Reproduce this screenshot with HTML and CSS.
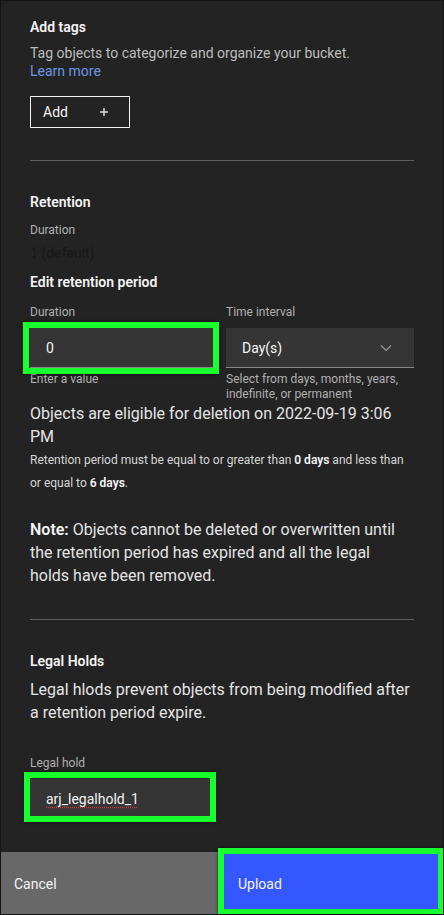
FILE: index.html
```html
<!DOCTYPE html>
<html lang="en">
<head>
<meta charset="utf-8">
<title>Upload options</title>
<link rel="stylesheet" href="styles.css">
</head>
<body>
<div class="panel">
  <div class="content">
    <section class="tags">
      <h3 class="heading">Add tags</h3>
      <p class="desc">Tag objects to categorize and organize your bucket.<br><a class="link" href="#">Learn more</a></p>
      <button class="btn-ghost" type="button"><span>Add</span>
        <svg class="plus" width="10" height="10" viewBox="0 0 10 10"><path d="M5 1v8M1 5h8" stroke="#e0e0e0" stroke-width="1.4" fill="none"/></svg>
      </button>
    </section>

    <hr class="divider">

    <section class="retention">
      <h3 class="heading">Retention</h3>
      <div class="label label-ro">Duration</div>
      <div class="default-val">1 (default)</div>
      <h3 class="heading heading-edit">Edit retention period</h3>
      <div class="fields">
        <div class="field">
          <label class="label">Duration</label>
          <div class="input-wrap">
            <div class="input">0</div>
            <div class="highlight hl-duration"></div>
          </div>
          <div class="helper">Enter a value</div>
        </div>
        <div class="field">
          <label class="label">Time interval</label>
          <div class="select">
            <span>Day(s)</span>
            <svg class="chev" width="12" height="8" viewBox="0 0 12 8"><path d="M1 1.5l5 5 5-5" stroke="#9a9a9a" stroke-width="1.2" fill="none"/></svg>
          </div>
          <div class="helper">Select from days, months, years, indefinite, or permanent</div>
        </div>
      </div>
      <p class="body">Objects are eligible for deletion on 2022-09-19 3:06 PM</p>
      <p class="rule">Retention period must be equal to or greater than <b>0 days</b> and less than or equal to <b>6 days</b>.</p>
      <p class="body note"><b>Note:</b> Objects cannot be deleted or overwritten until the retention period has expired and all the legal<br>holds have been removed.</p>
    </section>

    <hr class="divider divider-2">

    <section class="legal">
      <h3 class="heading">Legal Holds</h3>
      <p class="body legal-desc">Legal hlods prevent objects from being modified after a retention period expire.</p>
      <label class="label legal-label">Legal hold</label>
      <div class="input-wrap legal-wrap">
        <div class="input"><span class="spell">arj_legalhold_1</span></div>
        <div class="highlight hl-legal"></div>
      </div>
    </section>
  </div>

  <div class="footer">
    <button class="btn btn-cancel" type="button">Cancel</button>
    <div class="upload-wrap">
      <button class="btn btn-upload" type="button">Upload</button>
      <div class="highlight hl-upload"></div>
    </div>
  </div>
</div>
</body>
</html>
```

FILE: styles.css
```css
* { box-sizing: border-box; }

html, body {
  margin: 0;
  padding: 0;
  background: #232323;
}

body {
  font-family: Roboto, "Liberation Sans", Arial, sans-serif;
  color: #f4f4f4;
}

.panel {
  width: 444px;
  height: 915px;
  border: 1px solid #141414;
  background: #232323;
  display: flex;
  flex-direction: column;
  overflow: hidden;
}

.content {
  flex: 1;
  padding: 17px 29px 0 29px;
  overflow: hidden;
}

.heading {
  margin: 0;
  font-size: 14px;
  line-height: 18px;
  font-weight: 600;
  color: #f4f4f4;
}

.desc {
  margin: 8px 0 0;
  font-size: 14px;
  line-height: 18px;
  color: #bdbdbd;
}

.link {
  color: #6e95e6;
  text-decoration: none;
}

.btn-ghost {
  margin-top: 16px;
  width: 100px;
  height: 32px;
  padding: 0 0 0 12px;
  background: transparent;
  border: 1px solid #f4f4f4;
  color: #f4f4f4;
  font-family: inherit;
  font-size: 14px;
  display: flex;
  align-items: center;
}

.btn-ghost .plus {
  margin-left: 31px;
}

.divider {
  margin: 32px 0 0;
  border: 0;
  height: 1px;
  background: #5e5e5e;
}

.retention .heading:first-child {
  margin-top: 32px;
}

.label {
  display: block;
  font-size: 12px;
  line-height: 16px;
  color: #b0b0b0;
}

.label-ro {
  margin-top: 11px;
}

.default-val {
  margin-top: 6px;
  font-size: 14px;
  line-height: 18px;
  color: #181818;
}

.heading-edit {
  margin-top: 11px;
}

.fields {
  margin-top: 13px;
  display: grid;
  grid-template-columns: 184px 188px;
  column-gap: 12px;
}

.field .label {
  margin-bottom: 8px;
}

.input-wrap {
  position: relative;
}

.input {
  height: 40px;
  background: #353535;
  border-bottom: 1px solid #8a8a8a;
  padding: 0 16px;
  display: flex;
  align-items: center;
  font-size: 14px;
  color: #f4f4f4;
}

.select {
  height: 40px;
  background: #353535;
  border-bottom: 1px solid #8a8a8a;
  padding: 0 22px 0 16px;
  display: flex;
  align-items: center;
  justify-content: space-between;
  font-size: 14px;
  color: #f4f4f4;
}

.helper {
  margin-top: 4px;
  font-size: 12px;
  line-height: 15px;
  color: #b0b0b0;
}

.highlight {
  position: absolute;
  border: 6px solid #17ff2f;
  box-shadow: 0 0 3px rgba(0, 0, 0, 0.7);
  pointer-events: none;
}

.hl-duration {
  left: -7px;
  right: -5px;
  top: -6px;
  bottom: -6px;
}

.body {
  margin: 0;
  font-size: 16px;
  line-height: 23px;
  color: #e4e4e4;
}

.body b {
  font-weight: 600;
  color: #f4f4f4;
}

.rule {
  margin: 1px 0 0;
  font-size: 12px;
  line-height: 23px;
  color: #d6d6d6;
}

.rule b {
  font-weight: 600;
  color: #f4f4f4;
}

.note {
  margin-top: 23px;
}

.legal .heading {
  margin-top: 32px;
}

.legal-desc {
  margin-top: 8px;
}

.legal-label {
  margin-top: 31px;
}

.legal-wrap {
  margin-top: 8px;
  width: 186px;
}

.spell {
  text-decoration: underline dotted #d23b3b;
  text-underline-offset: 3px;
}

.hl-legal {
  left: -6px;
  right: 0;
  top: -7px;
  bottom: -3px;
}

.footer {
  height: 62px;
  display: grid;
  grid-template-columns: 221px 221px;
}

.btn {
  border: 0;
  margin: 0;
  height: 100%;
  text-align: left;
  font-family: inherit;
  font-size: 14px;
  color: #f4f4f4;
  padding: 1px 0 0 13px;
}

.btn-cancel {
  background: #686868;
}

.upload-wrap {
  position: relative;
}

.btn-upload {
  width: 100%;
  background: #3557ff;
  padding-left: 16px;
}

.hl-upload {
  left: -4px;
  right: -1px;
  top: -4px;
  bottom: -1px;
}
```
